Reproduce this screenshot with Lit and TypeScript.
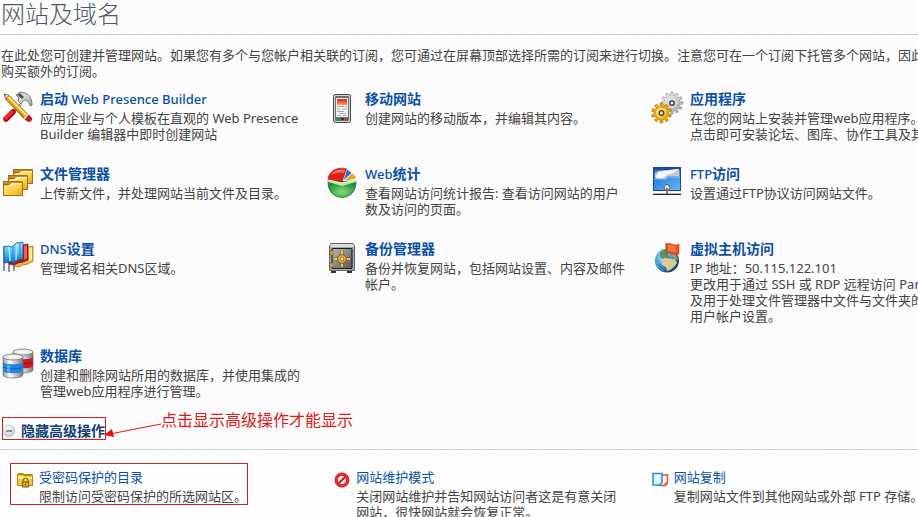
import { LitElement, html, css, svg, nothing } from "lit";
import { customElement, property, state } from "lit/decorators.js";

const gearPath = (cx: number, cy: number, outer: number, inner: number, teeth: number): string => {
  const points: string[] = [];
  const step = (Math.PI * 2) / teeth;
  for (let i = 0; i < teeth; i++) {
    const a = i * step - Math.PI / 2;
    const at = (r: number, off: number) =>
      `${(cx + r * Math.cos(a + off * step)).toFixed(2)} ${(cy + r * Math.sin(a + off * step)).toFixed(2)}`;
    points.push(at(inner, -0.32), at(outer, -0.2), at(outer, 0.2), at(inner, 0.32));
  }
  return `M${points.join("L")}Z`;
};

const folder = (x: number, y: number) => svg`
  <path d="M${x} ${y + 1}h19l1 1v14h-20z" fill="#a96d0c"/>
  <path d="M${x + 1} ${y + 2}h18v2h-18z" fill="#c98c1c"/>
  <path d="M${x + 1} ${y + 6}l5 -1l3 -2h10v3z" fill="#f3efe2"/>
  <path d="M${x + 1} ${y + 6}h7l3 -2h8v11h-18z" fill="url(#gold)"/>
  <path d="M${x + 1} ${y + 6}h7l3 -2h8" fill="none" stroke="#fff0a8" stroke-width=".7"/>`;

const cylinder = (x: number, y: number, mid: string, dark: string) => svg`
  <path d="M${x} ${y + 3}v18c0 4 20 4 20 0v-18z" fill="url(#steel)" stroke="#777" stroke-width=".7"/>
  <path d="M${x} ${y + 8}c0 3 20 3 20 0v9c0 3 -20 3 -20 0z" fill="${mid}"/>
  <path d="M${x} ${y + 12}c0 3 20 3 20 0v1c0 3 -20 3 -20 0z" fill="${dark}"/>
  <path d="M${x + 4} ${y + 10}v8l3 1v-8z" fill="#fff" opacity=".3"/>
  <ellipse cx="${x + 10}" cy="${y + 3}" rx="10" ry="3" fill="#e8e8e8" stroke="#777" stroke-width=".8"/>
  <ellipse cx="${x + 10}" cy="${y + 3}" rx="6" ry="1.2" fill="#fafafa"/>`;

const defs = svg`<defs>
  <linearGradient id="gold" x1="0" y1="0" x2="1" y2="1"><stop offset="0" stop-color="#ffe98a"/><stop offset=".5" stop-color="#fbd34c"/><stop offset="1" stop-color="#e2a51c"/></linearGradient>
  <linearGradient id="steel"><stop offset="0" stop-color="#999"/><stop offset=".35" stop-color="#fff"/><stop offset="1" stop-color="#777"/></linearGradient>
  <linearGradient id="metal" x1="0" y1="0" x2="1" y2="1"><stop offset="0" stop-color="#f5f5f5"/><stop offset=".5" stop-color="#cfcfcf"/><stop offset="1" stop-color="#9a9a9a"/></linearGradient>
  <linearGradient id="safe" x1="0" y1="0" x2="1" y2="1"><stop offset="0" stop-color="#b5b5b5"/><stop offset="1" stop-color="#5b5b5b"/></linearGradient>
  <linearGradient id="sky" x1="0" y1="0" x2="1" y2="1"><stop offset="0" stop-color="#2068c4"/><stop offset=".5" stop-color="#3f92ea"/><stop offset="1" stop-color="#6cb6f7"/></linearGradient>
  <linearGradient id="flag" x1="0" y1="0" x2="0" y2="1"><stop offset="0" stop-color="#9be1ff"/><stop offset=".5" stop-color="#4dbcf8"/><stop offset="1" stop-color="#0f6fcf"/></linearGradient>
  <linearGradient id="screen" x1="0" y1="0" x2="0" y2="1"><stop offset="0" stop-color="#e3210f"/><stop offset="1" stop-color="#ff9f58"/></linearGradient>
  <radialGradient id="globe" cx=".35" cy=".35" r=".7"><stop offset="0" stop-color="#c4ecfc"/><stop offset=".5" stop-color="#3f9bd2"/><stop offset="1" stop-color="#0b3c66"/></radialGradient>
  <radialGradient id="green" cx=".5" cy=".65" r=".6"><stop offset="0" stop-color="#86df78"/><stop offset="1" stop-color="#1d8c38"/></radialGradient>
  <radialGradient id="disc" cx=".4" cy=".35" r=".7"><stop offset="0" stop-color="#fff"/><stop offset="1" stop-color="#b9c6cf"/></radialGradient>
</defs>`;

const icons = {
  tools: svg`
    <path d="M19 13L11 21" stroke="#777" stroke-width="2.4"/>
    <path d="M19 13L11 21" stroke="#ddd" stroke-width="1"/>
    <path d="M11 21L4 28" stroke="#a40808" stroke-width="5.5" stroke-linecap="round"/>
    <path d="M10 21L4 27" stroke="#f52a1e" stroke-width="3.6" stroke-linecap="round"/>
    <path d="M14 4l4-3 5 1c5 2 7 6 7 12l-2 1c-1-4-3-6-6-6l-3 4-3-3 1-3z" fill="url(#metal)" stroke="#666" stroke-width=".8"/>
    <path d="M15 4l3-2 4 4-2 2z" fill="#555"/>
    <path d="M2 3l5 1 21 21-4 5L3 8z" fill="#8a6414"/>
    <path d="M5 7l2-2 19 19-2 2z" fill="#ffe267"/>
    <path d="M4 8l2-1 19 19-1 2z" fill="#e9a520"/>
    <path d="M2 3l5 1-3 4z" fill="#f4d8ad" stroke="#85612b" stroke-width=".5"/>
    <path d="M2 3l2 .4-1 1.4z" fill="#222"/>
    <path d="M27 24l3 3c1 2-2 4-4 4l-3-3z" fill="#c5161d"/>
    <path d="M22 28l4-5" stroke="#ddd" stroke-width="1.800"/>`,
  phone: svg`
    <rect x="6.500" y="3.500" width="17" height="28" rx="2" fill="#d5d5d5" stroke="#4c4c4c"/>
    <rect x="8" y="5" width="14" height="25" rx="1" fill="#68706e"/>
    <rect x="9" y="7" width="12" height="19" fill="#f4f4f4"/>
    <rect x="10" y="8" width="10" height="6" fill="url(#screen)"/>
    <path d="M10 15.500h7M18 15.500h2M10 18h3M15 18h5M10 20.500h7M12 22.500h7M10 24.500h4M16 24.500h4" stroke="#aaa"/>
    <path d="M10 28h3" stroke="#1f9b45" stroke-width="2"/><path d="M18 28h3" stroke="#d52b21" stroke-width="2"/><path d="M14 28h3" stroke="#333" stroke-width="2"/>`,
  gears: svg`
    <path d="${gearPath(20, 12, 11, 8, 12)}" fill="url(#metal)" stroke="#999" stroke-width=".7"/>
    <circle cx="20" cy="12" r="5" fill="#e4e4e4" opacity=".6"/>
    <circle cx="20" cy="12" r="2.200" fill="#f2f2f2" stroke="#333" stroke-width="1.300"/>
    <path d="${gearPath(9.5, 22, 10, 7, 10)}" fill="#e8a912" stroke="#a8700f" stroke-width=".7"/>
    <circle cx="9.500" cy="22" r="5.500" fill="url(#gold)"/>
    <circle cx="9.500" cy="22" r="2.300" fill="#ddd" stroke="#49402d" stroke-width="1.300"/>`,
  folders: svg`${folder(11, 2)}${folder(6, 8)}${folder(1, 14)}`,
  pie: svg`
    <path d="M1 15C0 37 30 37 29 15z" fill="url(#green)" stroke="#16692b" stroke-width=".7"/>
    <path d="M1 14l14 3 14-3v2l-14 4L1 16z" fill="#b5e8a8"/>
    <path d="M15 16L1 14C1 5 11 0 20 3z" fill="#df2118" stroke="#8c1712" stroke-width=".6"/>
    <path d="M4 9c3-5 8-6 14-5l-1 3C12 6 8 7 4 9z" fill="#ff9489" opacity=".7"/>
    <path d="M16 15l4-12 5 4z" fill="#2a6fd0" stroke="#fff" stroke-width=".5"/>
    <path d="M17 15l8-8c3 2 4 4 4 6z" fill="#eda519" stroke="#fff" stroke-width=".5"/>
    <path d="M1 14l14 3 14-3" fill="none" stroke="#edffe8" stroke-width="1"/>`,
  ftp: svg`
    <rect x="1.500" y="1.500" width="27" height="23" fill="url(#sky)" stroke="#12479a"/>
    <path d="M2 2h26v2H2z" fill="#164d9e"/>
    <path d="M3 11V7l3-2 10-1 11-1v7H16l-3 3H5z" fill="#c8c8c8"/>
    <path d="M3 11l4-5 12-2 8-1-6 4-6 2-4 3H5z" fill="#f8f8f8"/>
    <path d="M2 13h11l3-2h12" fill="none" stroke="#8ac9ff"/>
    <path d="M1 28.500h28" stroke="#222"/><path d="M1 27.500h28" stroke="#bbb"/>
    <circle cx="15" cy="21.500" r="3" fill="#ddd" stroke="#555"/><path d="M14 22h2v6h-2z" fill="#777"/>`,
  dns: svg`
    <path d="M2 5v25M7 20v11M12 20v10" stroke="#777" stroke-width="1.600"/>
    <path d="M12 20l8-2V9l6-3 5-1v15l-5 3-5 1-4 2-5-1z" fill="#e9b83a" stroke="#93650e" stroke-width=".7"/>
    <path d="M27 7l3-1v13l-3 2z" fill="#ffe98c"/>
    <path d="M7 20l9-2V7l5-3 5-1v16l-5 2-5 1-4 2-5-1z" fill="#b5141b" stroke="#6e1011" stroke-width=".7"/>
    <path d="M22 5l3-1v13l-3 2z" fill="#fb5a4b"/>
    <path d="M2 6l4-1 4 1 4-4 7-1v17l-5 1-4 3-4-1-6 1z" fill="url(#flag)" stroke="#0c5796" stroke-width=".8"/>
    <path d="M7 6l1 14M15 3l-1 16" stroke="#d4f3ff" stroke-width="1.600" opacity=".7"/>
    <path d="M11 5v15M18 2v16" stroke="#1b84d0" stroke-width=".8"/>`,
  safe: svg`
    <path d="M4 32h5v-2h-5zM20 32h5v-2h-5z" fill="#333"/>
    <path d="M4 2h22l2 3v24q0 1-1 1H3q-1 0-1-1V5z" fill="#666"/>
    <path d="M4 3h22l1 3H3z" fill="#ddd"/><path d="M3 6h24v23H3z" fill="#aaa"/>
    <rect x="5" y="7.500" width="20" height="20" rx="1" fill="url(#safe)" stroke="#222" stroke-width="1.200"/>
    <path d="M3 10h3v4H3zM3 22h3v4H3z" fill="#e6a927" stroke="#775112" stroke-width=".5"/>
    <path d="M15 10v16M7 18h16" stroke="#805711" stroke-width="3"/>
    <path d="M15 10v16M7 18h16" stroke="#f6c246" stroke-width="2"/>
    <circle cx="15" cy="18" r="4.300" fill="#f2b832" stroke="#6b4711" stroke-width=".8"/><circle cx="15" cy="18" r="2" fill="#d9dde0" stroke="#694918" stroke-width=".7"/>`,
  globe: svg`
    <circle cx="15" cy="19.500" r="12" fill="url(#globe)"/>
    <path d="M8 12l4-3 4 2 0 4 3 1-3 2-3-1-3 1-2-2z" fill="#4f8a55" opacity=".9"/>
    <path d="M9 19l5-2 4 1 5 0 2 4-3 4-4 3-3 1-1-4-4-2z" fill="#dcc896"/>
    <path d="M20 13l4 1 2 5-3-1-3-2z" fill="#91a267"/>
    <path d="M4 21c1 4 4 7 8 9" fill="none" stroke="#8bd7ff" opacity=".6"/>
    <path d="M14 2l1 14" stroke="#a9651a" stroke-width="1.600"/><circle cx="14" cy="2" r="1" fill="#f5c64c"/>
    <path d="M15 3c4-2 7 3 12 0v10c-5 2-8-2-12-1z" fill="#e94f1d" stroke="#c0400f" stroke-width=".6"/>
    <path d="M16 4c3-1 5 2 8 1v6c-3 0-5-2-8-1z" fill="#ff8c4d" opacity=".7"/>`,
  database: svg`${cylinder(11, 1, "#c71d24", "#9c0f16")}${cylinder(1, 6, "#1f86dd", "#0a62b8")}`,
  lock: svg`
    <path d="M0 2l2-1h4l1 1h8l1 1v11H1L0 13z" fill="#b8800c"/>
    <path d="M1 3h5l1 1h8v9H1z" fill="#f6c832"/><path d="M1 4l14 1v2H1z" fill="#ffe991"/>
    <path d="M6 10V8.500q0-2.500 2.500-2.500T11 8.500V10" fill="none" stroke="#6b541a" stroke-width="1"/>
    <path d="M5.500 10h6v5h-6z" fill="#eeb41b" stroke="#60450a" stroke-width=".9"/><path d="M8 11.500h1v2H8z" fill="#3f2c05"/>`,
  forbidden: svg`
    <circle cx="8" cy="8" r="5.800" fill="#fff4f4" stroke="#c3121b" stroke-width="3.200"/>
    <circle cx="8" cy="8" r="5.800" fill="none" stroke="#ef2d2d" stroke-width="2.200"/>
    <path d="M4.500 11.500l7-7" stroke="#d71820" stroke-width="2.200"/>`,
  copy: svg`
    <path d="M7 3h8.500v8l-2 2.500H7z" fill="#fff4ef" stroke="#e64a20" stroke-width="1.400"/>
    <path d="M13 14v-3h3" fill="none" stroke="#e64a20"/>
    <path d="M1 1.500h9v9l-2 2.500H1z" fill="#d9f0ff" stroke="#2b93e6" stroke-width="1.600"/>
    <path d="M3 3h5v6H3z" fill="#fff" opacity=".7"/>`,
};

type IconName = keyof typeof icons;

interface Tool {
  icon: IconName;
  latin?: string;
  title: string;
  lines: string[];
  marked?: boolean;
}

const TOOLS: Tool[] = [
  { icon: "tools", title: "启动", latin: " Web Presence Builder", lines: ["应用企业与个人模板在直观的 Web Presence", "Builder 编辑器中即时创建网站"] },
  { icon: "phone", title: "移动网站", lines: ["创建网站的移动版本，并编辑其内容。"] },
  { icon: "gears", title: "应用程序", lines: ["在您的网站上安装并管理web应用程序。", "点击即可安装论坛、图库、协作工具及其"] },
  { icon: "folders", title: "文件管理器", lines: ["上传新文件，并处理网站当前文件及目录。"] },
  { icon: "pie", latin: "Web", title: "统计", lines: ["查看网站访问统计报告: 查看访问网站的用户", "数及访问的页面。"] },
  { icon: "ftp", latin: "FTP", title: "访问", lines: ["设置通过FTP协议访问网站文件。"] },
  { icon: "dns", latin: "DNS", title: "设置", lines: ["管理域名相关DNS区域。"] },
  { icon: "safe", title: "备份管理器", lines: ["备份并恢复网站，包括网站设置、内容及邮件", "帐户。"] },
  { icon: "globe", title: "虚拟主机访问", lines: ["IP 地址：50.115.122.101", "更改用于通过 SSH 或 RDP 远程访问 Panel", "及用于处理文件管理器中文件与文件夹的", "用户帐户设置。"] },
  { icon: "database", title: "数据库", lines: ["创建和删除网站所用的数据库，并使用集成的", "管理web应用程序进行管理。"] },
];

const ADVANCED: Tool[] = [
  { icon: "lock", title: "受密码保护的目录", lines: ["限制访问受密码保护的所选网站区。"], marked: true },
  { icon: "forbidden", title: "网站维护模式", lines: ["关闭网站维护并告知网站访问者这是有意关闭", "网站，很快网站就会恢复正常。"] },
  { icon: "copy", title: "网站复制", lines: ["复制网站文件到其他网站或外部 FTP 存储。"] },
];

@customElement("tool-item")
export class ToolItem extends LitElement {
  @property({ attribute: false }) tool!: Tool;
  @property({ type: Boolean, reflect: true }) small = false;

  static styles = css`
    :host { display: block; min-width: 0; }
    .item { display: flex; gap: 6px; }
    .icon { flex: none; width: 32px; height: 34px; margin-top: 1px; overflow: visible; }
    .text { white-space: nowrap; }
    .title { display: block; line-height: 18px; margin-bottom: 2px; font-size: 14px; font-weight: 700; color: #0a50a5; text-decoration: none; white-space: pre; }
    .title:hover { text-decoration: underline; }
    .latin { font-size: 13px; font-weight: 500; }
    .line { display: block; line-height: 16px; }
    :host([small]) .item { padding: 4px 0 0 6px; border: 1px solid transparent; width: max-content; }
    :host([small]) .icon { width: 16px; height: 16px; margin-top: 4px; }
    :host([small]) .title { font-size: 13px; font-weight: 400; }
    :host([small]) .marked { border-color: #c9232b; }
  `;

  render() {
    const { icon, title, latin, lines, marked } = this.tool;
    const word = latin ? html`<span class="latin">${latin}</span>` : nothing;
    const leads = latin && !latin.startsWith(" ");
    return html`<div class="item ${marked ? "marked" : ""}">
      <svg class="icon" viewBox=${this.small ? "0 0 16 16" : "0 0 32 34"} aria-hidden="true">${defs}${icons[icon]}</svg>
      <div class="text">
        <a class="title" href="#">${leads ? word : nothing}${title}${leads ? nothing : word}</a>
        ${lines.map((l) => html`<span class="line">${l}</span>`)}
      </div>
    </div>`;
  }
}

@customElement("app-root")
export class AppRoot extends LitElement {
  @state() private open = true;

  static styles = css`
    :host {
      display: flex; flex-direction: column; height: 100vh; overflow: hidden;
      font: 13px/16px "Noto Sans", "Noto Sans CJK SC", sans-serif; color: #444;
      background: #fefefe;
    }
    .main {
      flex: none;
      background: repeating-linear-gradient(45deg, #fafafa 0 1px, #fcfcfc 1px 3px);
      border-bottom: 1px solid #ccd3d6;
    }
    .heading { margin: 0; padding: 0 0 6px 1px; border-bottom: 1px solid #c8ccca; font-size: 24px; line-height: 28px; font-weight: 300; color: #505963; }
    .intro { margin: 12px 0 11px 1px; white-space: nowrap; }
    .intro span { display: block; }
    .tools { display: grid; grid-template-columns: repeat(3, 1fr); row-gap: 23px; margin: 0 -59px 0 2px; }
    .advanced { display: grid; grid-template-columns: repeat(3, 1fr); margin: 13px -44px 0 10px; }
    .bar { position: relative; display: flex; margin: 18px 0 9px 2px; }
    .toggle {
      display: flex; align-items: center; gap: 5px; height: 23px; padding: 4px 0 0; border: 1px solid #c9232b;
      background: none; box-sizing: border-box; color: #123f73; font: 700 14px/16px "Noto Sans", "Noto Sans CJK SC", sans-serif; cursor: pointer;
    }
    .sign { width: 13px; height: 14px; }
    .note { position: absolute; left: 102px; top: -7px; display: flex; color: #e01818; font-size: 16px; line-height: 20px; white-space: nowrap; }
    .arrow { width: 57px; height: 30px; flex: none; }
  `;

  render() {
    return html`
      <section class="main">
        <h1 class="heading">网站及域名</h1>
        <p class="intro">
          <span>在此处您可创建并管理网站。如果您有多个与您帐户相关联的订阅，您可通过在屏幕顶部选择所需的订阅来进行切换。注意您可在一个订阅下托管多个网站，因此</span>
          <span>购买额外的订阅。</span>
        </p>
        <div class="tools">${TOOLS.map((t) => html`<tool-item .tool=${t}></tool-item>`)}</div>
        <div class="bar">
          <button class="toggle" aria-expanded=${this.open} @click=${() => (this.open = !this.open)}>
            <svg class="sign" viewBox="0 0 13 14" aria-hidden="true">${defs}
              <circle cx="6" cy="7" r="6" fill="url(#disc)" stroke="#cbd2d6" stroke-width=".8"/>
              <path d="M3 7h6" stroke="#6c7880" stroke-width="1.500"/>
            </svg>隐藏高级操作</button>
          <div class="note">
            <svg class="arrow" viewBox="0 0 57 30" aria-hidden="true">
              <path d="M57 14L6 24" stroke="#d41c1c" stroke-width="1"/>
              <path d="M0 25l8-6 2 8z" fill="#e80c0c"/>
            </svg>点击显示高级操作才能显示
          </div>
        </div>
      </section>
      ${this.open
        ? html`<section class="advanced">${ADVANCED.map((t) => html`<tool-item small .tool=${t}></tool-item>`)}</section>`
        : nothing}
    `;
  }
}
